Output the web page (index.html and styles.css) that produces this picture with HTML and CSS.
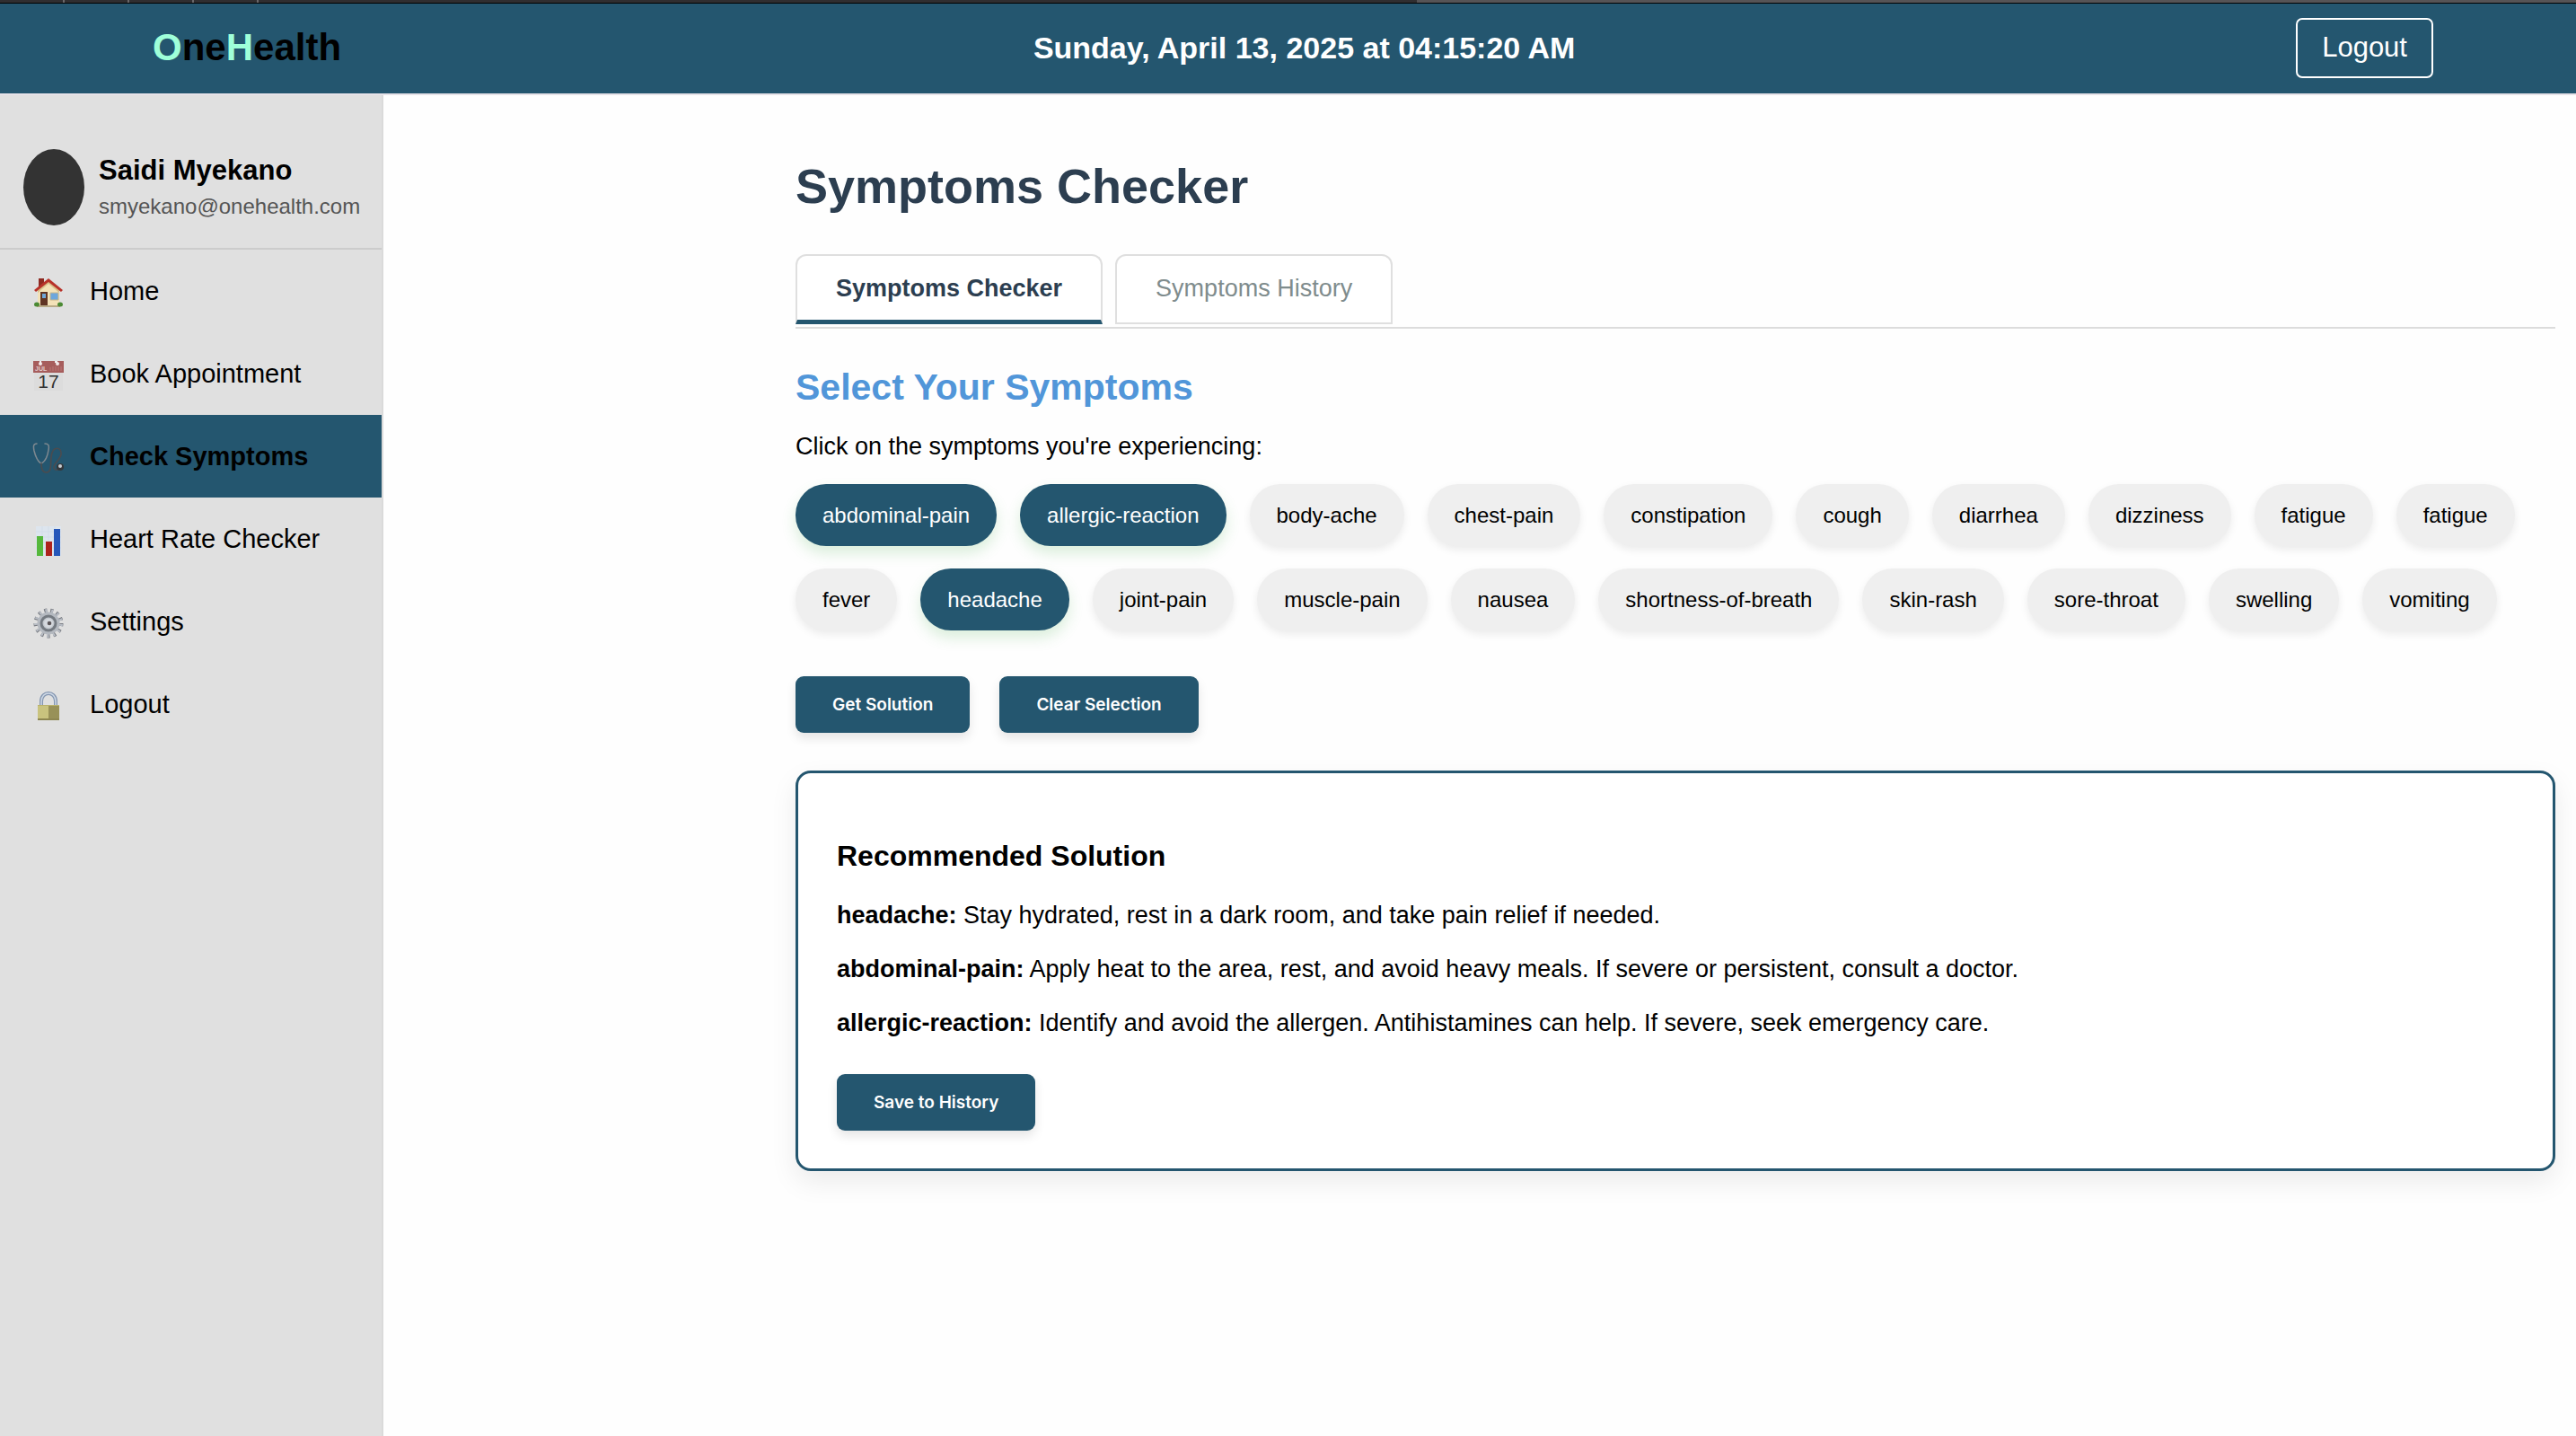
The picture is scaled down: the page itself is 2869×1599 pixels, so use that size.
FILE: index.html
```html
<!DOCTYPE html>
<html lang="en">
<head>
<meta charset="utf-8">
<title>OneHealth - Symptoms Checker</title>
<link rel="stylesheet" href="styles.css">
</head>
<body>
<div class="tab-strip"></div>
<header class="topbar">
  <div class="logo"><span>O</span>ne<span>H</span>ealth</div>
  <div class="clock">Sunday, April 13, 2025 at 04:15:20 AM</div>
  <button class="logout" type="button">Logout</button>
</header>
<div class="shell">
  <aside class="sidebar">
    <div class="profile">
      <div class="avatar"></div>
      <div>
        <div class="name">Saidi Myekano</div>
        <div class="email">smyekano@onehealth.com</div>
      </div>
    </div>
    <nav class="nav">
      <a href="#home">
        <svg viewBox="0 0 34 34"><path d="M5 14 17 4l12 10v18H5z" fill="#f3e2b8"/><path d="M5 14 17 4l12 10v3L17 7 5 17z" fill="#d8c08a"/><path d="M6 1h6v6L6 12z" fill="#8e2a22"/><path d="M17 1 1 14l2 2L17 5l14 11 2-2z" fill="#b8322a"/><path d="M8 16h8v16H8z" fill="#5f3423"/><path d="M10 18h4v5h-4z" fill="#6fa6d8"/><path d="M19 17h9v8h-9z" fill="#6da7dc" stroke="#c9b68a"/><path d="M4 31h26v2H4z" fill="#b9ab88"/><ellipse cx="4" cy="30" rx="3" ry="2.5" fill="#4b8a34"/><ellipse cx="30" cy="30" rx="3" ry="2.5" fill="#4b8a34"/></svg>
        Home</a>
      <a href="#book">
        <svg viewBox="0 0 34 34"><path d="M1 13h32v21H1z" fill="#dcdcdc"/><path d="M0 1h34v13H0z" fill="#a65d5c"/><path d="M7 1h2v2H7zM24 1h3v2h-3z" fill="#eee"/><circle cx="8" cy="4" r="2" fill="#f2eaea"/><circle cx="27" cy="4" r="2" fill="#f2eaea"/><path d="M19 8v4M22 7v5M25 7v5M28 7v5M31 7v5" stroke="#b97877" stroke-width="1"/><text x="2" y="12" class="cal-month">JUL</text><text x="17" y="31" class="cal-day">17</text></svg>
        Book Appointment</a>
      <a href="#symptoms" class="active" aria-current="page">
        <svg viewBox="0 0 34 34" fill="none" stroke-linecap="round"><path d="M4 1C0 1 0 4 1 9c2 8 4 12 8 14 4-2 7-8 8-15 1-5 0-7-4-7" stroke="#7f8990" stroke-width="1.5"/><path d="M9 23c0 6 1 10 5 10 7 0 5-8 6-17 1-13 12-12 11-3-1 6-9 11-8 15 1 3 4 3 6 0" stroke="#4a4c50" stroke-width="1.7"/><circle cx="30" cy="27" r="4" fill="#34383c"/><circle cx="30" cy="26" r="2" fill="#c9ced2"/></svg>
        Check Symptoms</a>
      <a href="#heart">
        <svg viewBox="0 0 34 34"><path d="M3 1h28v33H3z" fill="#dde5ee"/><path d="M3 7h28M3 13h28M3 19h28M3 25h28M10 1v33M17 1v33M24 1v33" stroke="#d3dde8" stroke-width="1"/><path d="M4 12h7v22H4z" fill="#56b83c"/><path d="M14 18h7v16h-7z" fill="#ad231c"/><path d="M23 4h7v30h-7z" fill="#2657b9"/></svg>
        Heart Rate Checker</a>
      <a href="#settings">
        <svg viewBox="0 0 34 34" fill="none"><circle cx="17" cy="17" r="14" stroke="#777a80" stroke-width="5" stroke-dasharray="3 3.77"/><circle cx="17" cy="17" r="14" stroke="#b9bec6" stroke-width="4" stroke-dasharray="2 4.77" stroke-dashoffset="-1"/><circle cx="17" cy="17" r="11" fill="#c3c8ce" stroke="#b4b9c0" stroke-width="3"/><circle cx="17" cy="17" r="8" stroke="#747a81" stroke-width="3"/><circle cx="17" cy="17" r="5" fill="#d5d9de"/><circle cx="18" cy="17" r="2.3" fill="#5a5558"/></svg>
        Settings</a>
      <a href="#logout">
        <svg viewBox="0 0 34 34"><path d="M9 17v-5c0-12 16-12 16 0v5" fill="none" stroke="#8496b0" stroke-width="4"/><path d="M9 17v-5c0-12 16-12 16 0v5" fill="none" stroke="#cfd9e6" stroke-width="1.5"/><path d="M5 16h12v17H5z" fill="#c9c37e"/><path d="M17 16h12v17H17z" fill="#989158"/><path d="M5 31h24v2H5z" fill="#8d8650"/><path d="M5 16h24v1H5z" fill="#b9b26c"/></svg>
        Logout</a>
    </nav>
  </aside>
  <main class="main">
    <h1>Symptoms Checker</h1>
    <div class="tabs">
      <button type="button" class="tab selected">Symptoms Checker</button>
      <button type="button" class="tab">Symptoms History</button>
    </div>
    <h2>Select Your Symptoms</h2>
    <p class="hint">Click on the symptoms you're experiencing:</p>
    <div class="chips">
      <button type="button" class="chip on">abdominal-pain</button>
      <button type="button" class="chip on">allergic-reaction</button>
      <button type="button" class="chip">body-ache</button>
      <button type="button" class="chip">chest-pain</button>
      <button type="button" class="chip">constipation</button>
      <button type="button" class="chip">cough</button>
      <button type="button" class="chip">diarrhea</button>
      <button type="button" class="chip">dizziness</button>
      <button type="button" class="chip">fatigue</button>
      <button type="button" class="chip">fatigue</button>
      <button type="button" class="chip">fever</button>
      <button type="button" class="chip on">headache</button>
      <button type="button" class="chip">joint-pain</button>
      <button type="button" class="chip">muscle-pain</button>
      <button type="button" class="chip">nausea</button>
      <button type="button" class="chip">shortness-of-breath</button>
      <button type="button" class="chip">skin-rash</button>
      <button type="button" class="chip">sore-throat</button>
      <button type="button" class="chip">swelling</button>
      <button type="button" class="chip">vomiting</button>
    </div>
    <div class="actions">
      <button type="button" class="btn">Get Solution</button>
      <button type="button" class="btn">Clear Selection</button>
    </div>
    <section class="solution">
      <h3>Recommended Solution</h3>
      <p><strong>headache:</strong> Stay hydrated, rest in a dark room, and take pain relief if needed.</p>
      <p><strong>abdominal-pain:</strong> Apply heat to the area, rest, and avoid heavy meals. If severe or persistent, consult a doctor.</p>
      <p><strong>allergic-reaction:</strong> Identify and avoid the allergen. Antihistamines can help. If severe, seek emergency care.</p>
      <button type="button" class="btn">Save to History</button>
    </section>
  </main>
</div>
</body>
</html>
```
FILE: styles.css
```css
* { box-sizing: border-box; }
body {
  margin: 0;
  min-height: 100vh;
  display: flex;
  flex-direction: column;
  background: #fefefe;
  color: #000;
  font-family: "Liberation Sans", Arial, sans-serif;
}
button { font-family: inherit; cursor: pointer; }
h1, h2, h3, p { margin: 0; }

/* strip of window tabs above the header */
.tab-strip {
  height: 4px;
  border-bottom: 1px solid #000;
  background:
    repeating-linear-gradient(90deg, transparent 0 70px, #6a686a 70px 72px) 0 0 / 288px 100% no-repeat,
    linear-gradient(90deg, #302e30 55%, #565456 55%);
}
.topbar {
  display: flex;
  align-items: center;
  justify-content: space-between;
  height: 102px;
  padding: 0 159px 2px 170px;
  background: #24566f;
  border-bottom: 2px solid #e6e2e8;
}
.logo { font-size: 42px; font-weight: bold; }
.logo span { color: #9fffd9; }
.clock { margin-right: 32px; color: #fff; font-size: 34px; font-weight: bold; }
.logout {
  height: 67px;
  padding: 0 27px;
  border: 2px solid #fff;
  border-radius: 7px;
  background: transparent;
  color: #fff;
  font-size: 31px;
}

.shell { display: flex; flex: 1; }
.sidebar {
  flex: 0 0 427px;
  background: #e0e0e0;
  border-right: 2px solid #dadada;
}
.profile {
  display: flex;
  align-items: center;
  gap: 16px;
  padding: 60px 20px 25px 26px;
  border-bottom: 2px solid #ccc;
}
.avatar { flex: 0 0 68px; height: 85px; border-radius: 50%; background: #333; }
.name { padding-top: 2px; font-size: 31px; line-height: 40px; font-weight: bold; }
.email { font-size: 24px; line-height: 40px; color: #555; }
.nav a {
  display: flex;
  align-items: center;
  gap: 29px;
  height: 92px;
  padding-left: 37px;
  color: #000;
  font-size: 29px;
  text-decoration: none;
}
.nav svg { width: 34px; height: 34px; margin-top: 4px; overflow: visible; }
.nav .active { background: #24566f; font-weight: bold; }
.cal-month { font-size: 7px; font-weight: bold; fill: #e3cccc; }
.cal-day { font-size: 21px; font-weight: normal; fill: #333; text-anchor: middle; }

.main { flex: 1; padding: 70px 23px 72px 459px; }
h1 { color: #2c3e50; font-size: 54px; line-height: 62px; }
.tabs {
  display: flex;
  gap: 14px;
  margin-top: 45px;
  padding-bottom: 3px;
  border-bottom: 2px solid #dcdcdc;
}
.tab {
  height: 78px;
  padding: 0 43px 1px;
  border: 2px solid #dfdfdf;
  border-radius: 12px 12px 0 0;
  background: #fff;
  color: #7f8c8d;
  font-size: 27px;
}
.tab.selected {
  padding: 2px 43px 0;
  border-bottom: 5px solid #24566f;
  color: #2c3e50;
  font-weight: bold;
}
h2 { margin-top: 41px; color: #5196d9; font-size: 41px; line-height: 48px; }
.hint { margin-top: 26px; font-size: 27px; line-height: 32px; }
.chips { display: flex; flex-wrap: wrap; gap: 25px 26px; margin-top: 26px; }
.chip {
  height: 69px;
  padding: 0 30px;
  border: 0;
  border-radius: 34px;
  background: #efefef;
  color: #000;
  font-size: 24px;
  box-shadow: 0 4px 10px rgba(0, 0, 0, .08);
}
.chip.on {
  background: #24566f;
  color: #fff;
  box-shadow: 0 8px 16px rgba(76, 175, 80, .2);
}
.actions { display: flex; gap: 33px; margin-top: 51px; }
.btn {
  height: 63px;
  padding: 0 41px;
  border: 0;
  border-radius: 9px;
  background: #24566f;
  color: #fff;
  font-family: Inter, sans-serif;
  font-size: 19px;
  font-weight: 600;
  box-shadow: 0 6px 12px rgba(0, 0, 0, .1);
}
.solution {
  margin-top: 42px;
  padding: 74px 43px 42px;
  border: 3px solid #24566f;
  border-radius: 17px;
  background: #fff;
  box-shadow: 0 12px 30px rgba(0, 0, 0, .08);
}
.solution h3 { margin-bottom: 32px; font-size: 32px; line-height: 36px; }
.solution p { margin-top: 28px; font-size: 27px; line-height: 32px; }
.solution .btn { margin-top: 41px; }
```
